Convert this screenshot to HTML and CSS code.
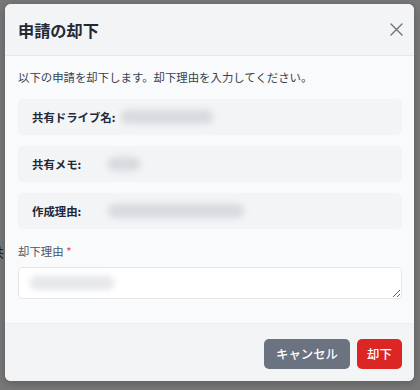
FILE: index.html
```html
<!DOCTYPE html>
<html lang="ja">
  <head>
    <meta charset="UTF-8" />
    <title>申請の却下</title>
    <link rel="stylesheet" href="styles.css">
  </head>
  <body>
    <div class="page">
      <p class="page-text">共</p>
    </div>

    <div class="overlay">
      <div class="modal">
        <div class="modal-header">
          <h2 class="modal-title">申請の却下</h2>
          <button class="close-btn" aria-label="閉じる">
            <svg width="13" height="13" viewBox="0 0 13 13">
              <path d="M1 1 L12 12 M12 1 L1 12" stroke="#6b7280" stroke-width="1.4" stroke-linecap="round" />
            </svg>
          </button>
        </div>

        <div class="modal-body">
          <p class="lead">以下の申請を却下します。却下理由を入力してください。</p>

          <div class="info-box">
            <span class="info-label">共有ドライブ名:</span>
            <span class="blur-value" style="width: 92px"></span>
          </div>
          <div class="info-box">
            <span class="info-label">共有メモ:</span>
            <span class="blur-value" style="width: 32px"></span>
          </div>
          <div class="info-box">
            <span class="info-label">作成理由:</span>
            <span class="blur-value" style="width: 136px"></span>
          </div>

          <label class="field-label">却下理由 <span class="required">*</span></label>
          <div class="textarea-wrap">
            <textarea class="reason"></textarea>
            <span class="blur-value blur-text"></span>
          </div>
        </div>

        <div class="modal-footer">
          <button class="btn btn-cancel">キャンセル</button>
          <button class="btn btn-reject">却下</button>
        </div>
      </div>
    </div>
  </body>
</html>
```

FILE: styles.css
```css
body {
  margin: 0;
  background-color: #787878;
  font-family: "Noto Sans CJK JP", "Noto Sans", sans-serif;
  height: 390px;
  overflow: hidden;
  position: relative;
}

.page {
  padding-top: 242px;
}

.page-text {
  margin: 0 0 0 -9px;
  font-size: 13px;
  color: #1f1f1f;
}

.overlay {
  position: absolute;
  top: 0;
  left: 0;
  right: 0;
  bottom: 0;
  padding: 4px 6px 0 5px;
}

.modal {
  width: 409px;
  height: 377px;
  background-color: #f9fafb;
  border-radius: 6px;
  box-shadow: 0 2px 8px rgba(0, 0, 0, 0.25);
  display: flex;
  flex-direction: column;
  overflow: hidden;
}

.modal-header {
  height: 51px;
  flex-shrink: 0;
  display: flex;
  align-items: center;
  justify-content: space-between;
  padding: 0 11px 0 13px;
  background-color: #f3f4f6;
  border-bottom: 1px solid #e5e7eb;
}

.modal-title {
  margin: 0;
  font-size: 16.2px;
  font-weight: 700;
  color: #1f2937;
}

.close-btn {
  border: none;
  background: none;
  padding: 0;
  width: 14px;
  height: 14px;
  display: flex;
  align-items: center;
  justify-content: center;
  margin-top: -1px;
}

.modal-body {
  flex: 1;
  padding: 13px 12px 0 13px;
}

.lead {
  margin: 0 0 14px;
  font-size: 11.4px;
  line-height: 16px;
  color: #374151;
}

.info-box {
  height: 36px;
  display: flex;
  align-items: center;
  padding: 0 14px;
  margin-bottom: 11px;
  background-color: #f3f4f6;
  border-radius: 5px;
}

.info-label {
  min-width: 70px;
  margin-right: 6px;
  font-size: 11.4px;
  font-weight: 700;
  color: #1f2937;
}

.blur-value {
  display: inline-block;
  height: 14px;
  background-color: #d8dadf;
  border-radius: 6px;
  filter: blur(3px);
}

.field-label {
  display: block;
  margin-top: 14px;
  font-size: 11.4px;
  line-height: 16px;
  color: #4b5563;
}

.required {
  color: #ef4444;
}

.textarea-wrap {
  position: relative;
  margin-top: 8px;
}

.reason {
  display: block;
  box-sizing: border-box;
  width: 100%;
  height: 32px;
  border: 1px solid #e5e7eb;
  border-radius: 4px;
  background-color: #ffffff;
  font-family: inherit;
  font-size: 11.4px;
}

.blur-text {
  position: absolute;
  left: 12px;
  top: 9px;
  width: 84px;
  background-color: #e6e7ea;
}

.modal-footer {
  height: 58px;
  flex-shrink: 0;
  display: flex;
  align-items: center;
  justify-content: flex-end;
  gap: 7px;
  padding: 2px 12px 0 0;
  box-sizing: border-box;
  background-color: #f3f4f6;
  border-top: 1px solid #eceef1;
}

.btn {
  height: 30px;
  padding: 0 11px;
  border: none;
  border-radius: 5px;
  font-family: inherit;
  font-size: 12.4px;
  font-weight: 500;
  color: #ffffff;
}

.btn-cancel {
  width: 86px;
  background-color: #6b7280;
}

.btn-reject {
  width: 45px;
  padding: 0;
  background-color: #dc2626;
}
```
